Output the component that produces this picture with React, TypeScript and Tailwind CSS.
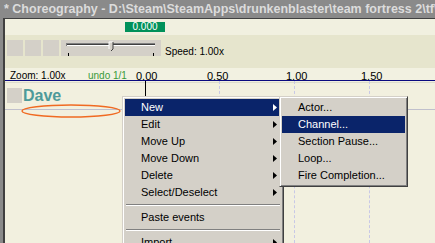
import React from "react";

const TITLE = "* Choreography - D:\\Steam\\SteamApps\\drunkenblaster\\team fortress 2\\tf\\scenes";

type Item = { label: string; sub?: boolean; hot?: boolean } | "sep";

const mainItems: Item[] = [
	{ label: "New", sub: true, hot: true },
	{ label: "Edit", sub: true },
	{ label: "Move Up", sub: true },
	{ label: "Move Down", sub: true },
	{ label: "Delete", sub: true },
	{ label: "Select/Deselect", sub: true },
	"sep",
	{ label: "Paste events" },
	"sep",
	{ label: "Import", sub: true },
];

const newItems: Item[] = [
	{ label: "Actor..." },
	{ label: "Channel...", hot: true },
	{ label: "Section Pause..." },
	{ label: "Loop..." },
	{ label: "Fire Completion..." },
];

const Arrow: React.FC<{ white?: boolean }> = ({ white }) => (
	<svg width="4" height="7" viewBox="0 0 4 7" className="shrink-0">
		<polygon points="0,0 4,3.5 0,7" fill={white ? "#ffffff" : "#000000"} />
	</svg>
);

// classic win32 popup menu
const Menu: React.FC<{ items: Item[]; className: string }> = ({ items, className }) => (
	<div
		className={`absolute bg-[#d4d0c8] border border-t-[#d4d0c8] border-l-[#d4d0c8] border-r-[#404040] border-b-[#404040] shadow-[inset_1px_1px_0_#ffffff,inset_-1px_-1px_0_#808080] p-[2px] ${className}`}
	>
		{items.map((it, i) =>
			it === "sep" ? (
				<div key={i} className="h-[8px] pt-[3px] px-[1px]">
					<div className="h-px bg-[#808080]" />
					<div className="h-px bg-white" />
				</div>
			) : (
				<div
					key={i}
					className={`h-[17px] flex items-center pl-[16px] pr-[4px] text-[11px] ${
						it.hot ? "bg-[#0a246a] text-white" : "text-black"
					}`}
				>
					<span className="flex-1 whitespace-nowrap">{it.label}</span>
					{it.sub && <Arrow white={it.hot} />}
				</div>
			)
		)}
	</div>
);

export default function App() {
	return (
		<div className="relative w-[435px] h-[243px] overflow-hidden flex flex-col bg-[#8a8a8a] font-['Liberation_Sans',Arial,sans-serif]">
			{/* Title bar */}
			<div className="h-[18px] shrink-0 flex items-center pl-[4px] text-[12.5px] font-bold text-[#dcdcdc] whitespace-nowrap overflow-hidden">
				{TITLE}
			</div>

			<div className="flex-1 ml-[3px] flex flex-col border-l-2 border-t border-[#404040] bg-[#f2f0df]">
				{/* Time readout */}
				<div className="h-[16px] shrink-0 bg-[#f1f0e0] pt-[3px] pl-[120px]">
					<div className="w-[40px] h-[10px] bg-[#00915a] text-white text-[10px] leading-[10px] text-center">
						0.000
					</div>
				</div>

				{/* Toolbar */}
				<div className="h-[33px] shrink-0 bg-[#e6e5cd] flex items-start gap-[2px] pt-[5px] pl-[2px]">
					<div className="w-[16px] h-[16px] bg-[#d4d0c8]" />
					<div className="w-[16px] h-[16px] bg-[#d4d0c8]" />
					<div className="w-[16px] h-[16px] bg-[#d4d0c8]" />
					<div className="w-[100px] h-[16px] bg-[#d4d0c8]">
						<svg width="100" height="16" viewBox="0 0 100 16">
							<rect x="5" y="3" width="89" height="1" fill="#808080" />
							<rect x="5" y="4" width="89" height="1" fill="#404040" />
							<rect x="5" y="5" width="89" height="1" fill="#ffffff" />
							<rect x="5" y="3" width="1" height="3" fill="#808080" />
							<polygon points="48,2 52,2 52,9 50,11 48,9" fill="#d4d0c8" />
							<polyline points="48,9 48,2 52,2" fill="none" stroke="#ffffff" strokeWidth="1" />
							<polyline points="52,2 52,9 50,11" fill="none" stroke="#404040" strokeWidth="1" />
							<rect x="7" y="13" width="1" height="3" fill="#000000" />
							<rect x="92" y="13" width="1" height="3" fill="#000000" />
						</svg>
					</div>
					<div className="ml-[2px] pt-[7px] text-[10px] leading-[10px] text-black whitespace-nowrap">
						Speed: 1.00x
					</div>
				</div>

				{/* Zoom / ruler */}
				<div className="relative h-[13px] shrink-0 bg-[#f2f1e1] border-b border-[#0a0a80] text-[10px] leading-[10px] whitespace-nowrap">
					<span className="absolute left-[5px] top-[3px] text-black">Zoom: 1.00x</span>
					<span className="absolute left-[83px] top-[3px] text-[#3a9a3a]">undo 1/1</span>
					<span className="absolute left-[131px] top-[3px] text-[11px] text-black">0.00</span>
					<span className="absolute left-[202px] top-[3px] text-[11px] text-black">0.50</span>
					<span className="absolute left-[281px] top-[3px] text-[11px] text-black">1.00</span>
					<span className="absolute left-[356px] top-[3px] text-[11px] text-black">1.50</span>
				</div>

				{/* Timeline */}
				<div className="relative flex-1 flex flex-col">
					<div className="h-px mt-[1px] bg-[#dcdccc]" />
					<div className="absolute left-[140px] top-0 h-[16px] w-px bg-black" />
					<div className="absolute left-[214px] top-0 bottom-0 border-l border-dashed border-[#c8c8e6]" />
					<div className="absolute left-[289px] top-0 bottom-0 border-l border-dashed border-[#c8c8e6]" />
					<div className="absolute left-[364px] top-0 bottom-0 border-l border-dashed border-[#c8c8e6]" />

					<div className="flex items-start gap-[1px] pl-[2px] pt-[5px]">
						<div className="w-[15px] h-[15px] bg-[#d4d0c8]" />
						<div className="text-[16px] leading-[15px] font-bold text-[#4e9a9a]">Dave</div>
					</div>
					<div className="h-px mt-[6px] bg-[#c0c0cc]" />

					<svg className="absolute left-[15px] top-[22px]" width="102" height="16" viewBox="0 0 102 16">
						<ellipse cx="51" cy="8" rx="49" ry="6" fill="none" stroke="#f06a22" strokeWidth="1.5" />
					</svg>
				</div>
			</div>

			<Menu items={mainItems} className="left-[122px] top-[96px] w-[162px]" />
			<Menu items={newItems} className="left-[279px] top-[96px] w-[129px]" />
		</div>
	);
}
